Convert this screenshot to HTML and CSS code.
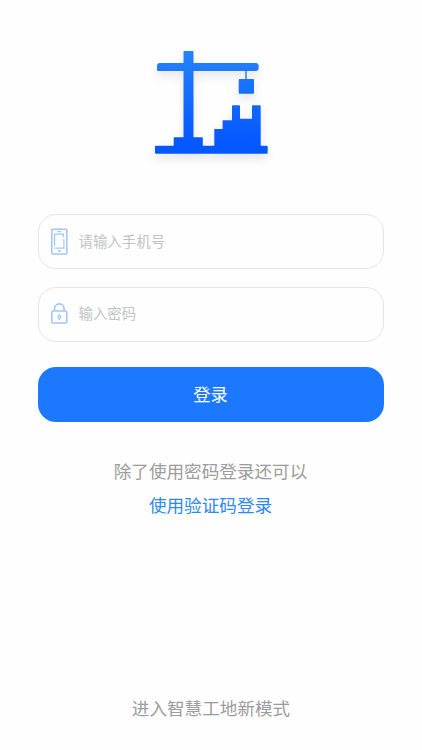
FILE: index.html
```
<!DOCTYPE html>
<html lang="zh-CN">
<head>
<meta charset="utf-8">
<meta name="viewport" content="width=device-width, initial-scale=1">
<title>登录</title>
<link rel="stylesheet" href="styles.css">
</head>
<body>
<main class="page">
  <svg class="logo" viewBox="0 0 135 130" aria-hidden="true">
    <defs>
      <linearGradient id="blue" gradientUnits="userSpaceOnUse" x1="0" y1="11" x2="0" y2="114">
        <stop offset="0" stop-color="#2484ff"/>
        <stop offset="0.25" stop-color="#1c76fb"/>
        <stop offset="0.85" stop-color="#0559ff"/>
        <stop offset="1" stop-color="#0458ff"/>
      </linearGradient>
    </defs>
    <g fill="url(#blue)">
      <path d="M39.3 11h8.4q.8 0 .8.8V23h62.2q3 0 3 3v2q0 3-3 3H48.5v66.3h8.3q1 0 1 1v7.5h11.5V89h8.3v-8.7H87v-14q0-1 1-1h6q1 0 1 1v12.4h12V66.3q0-1 1-1h6.7q1 0 1 1v39.5h6q1 0 1 1v5.900q0 1-1 1H11q-1 0-1-1v-5.900q0-1 1-1h17.700v-7.500q0-1 1-1h8.800V31H13q-1 0-1-1v-4q0-3 3-3h23.500V11.800q0-.8.8-.8z"/>
      <path d="M100.300 31h1.400v8h6.500q.8 0 .8.8v13q0 .9-.8.9H94.500q-.8 0-.8-.9v-13q0-.8.8-.8h5.800z"/>
    </g>
  </svg>
  <form class="form">
    <label class="field">
      <svg class="icon" viewBox="0 0 20 30" aria-hidden="true">
        <rect x="2.800" y="2.200" width="15" height="24.800" rx="1"/>
        <path class="thin" d="M8.300 4.700h4M5.600 18.800V7.200h8.700v3M14.900 12v9.200H5.600"/>
        <rect class="dot" x="9.200" y="23" width="2.200" height="1.900" rx=".5"/>
      </svg>
      <input class="input" type="tel" placeholder="请输入手机号">
    </label>
    <label class="field">
      <svg class="icon" viewBox="0 0 20 30" aria-hidden="true">
        <rect x="2.800" y="12" width="15" height="12" rx="1.500"/>
        <path d="M5.500 12V9.900a4.800 5 0 0 1 9.600 0V12"/>
        <path class="thin" d="M10.300 15.200v.7l1.500 2.200-1.500 2.200-1.500-2.200 1.500-2.200M10.300 20.300v1"/>
      </svg>
      <input class="input" type="password" placeholder="输入密码">
    </label>
    <button class="submit" type="button">登录</button>
  </form>
  <p class="hint">除了使用密码登录还可以</p>
  <a class="code-login">使用验证码登录</a>
  <a class="new-mode">进入智慧工地新模式</a>
</main>
</body>
</html>
```
FILE: styles.css
```
* { box-sizing: border-box; }

body {
  margin: 0;
  background: #fefefe;
  font-family: "Noto Sans CJK SC", sans-serif;
}

.page {
  display: flex;
  flex-direction: column;
  align-items: center;
  height: 750px;
  padding: 40px 39px 27px 38px;
}

.logo {
  width: 135px;
  height: 130px;
  margin-left: 4px;
  filter: drop-shadow(0 5px 5px rgba(40, 50, 70, 0.12));
}

.form {
  width: 346px;
  margin-top: 44px;
}

.field {
  display: flex;
  align-items: center;
  height: 55px;
  margin-bottom: 17.500px;
  padding-left: 10px;
  border: 1px solid #e5e5e8;
  border-radius: 18px;
  background: #fefefe;
}

.icon {
  width: 20px;
  height: 30px;
  fill: none;
  stroke: #a2c6f8;
  stroke-width: 1.600;
}

.icon .thin { stroke-width: 1.200; }
.icon .dot { fill: #a2c6f8; stroke: none; }

.input {
  flex: 1;
  min-width: 0;
  height: 30px;
  margin: 0 0 2px 10px;
  padding: 0;
  border: 0;
  outline: 0;
  background: transparent;
  font: 400 14.450px/30px "Noto Sans CJK SC", sans-serif;
}

.input::placeholder { color: #c2c2c5; opacity: 1; }

.submit {
  display: block;
  width: 100%;
  height: 55px;
  margin-top: 25px;
  padding: 0 0 2px;
  border: 0;
  border-radius: 18px;
  background: #1b78ff;
  color: #fff;
  font: 400 17.300px/53px "Noto Sans CJK SC", sans-serif;
}

.hint,
.code-login,
.new-mode {
  margin: 0;
  font-size: 17.600px;
  line-height: 30px;
  color: #9c9c9c;
}

.hint { margin-top: 34px; }

.code-login {
  margin-top: 4px;
  color: #2c88f2;
}

.new-mode {
  margin-top: auto;
  padding-left: 1px;
}
```
